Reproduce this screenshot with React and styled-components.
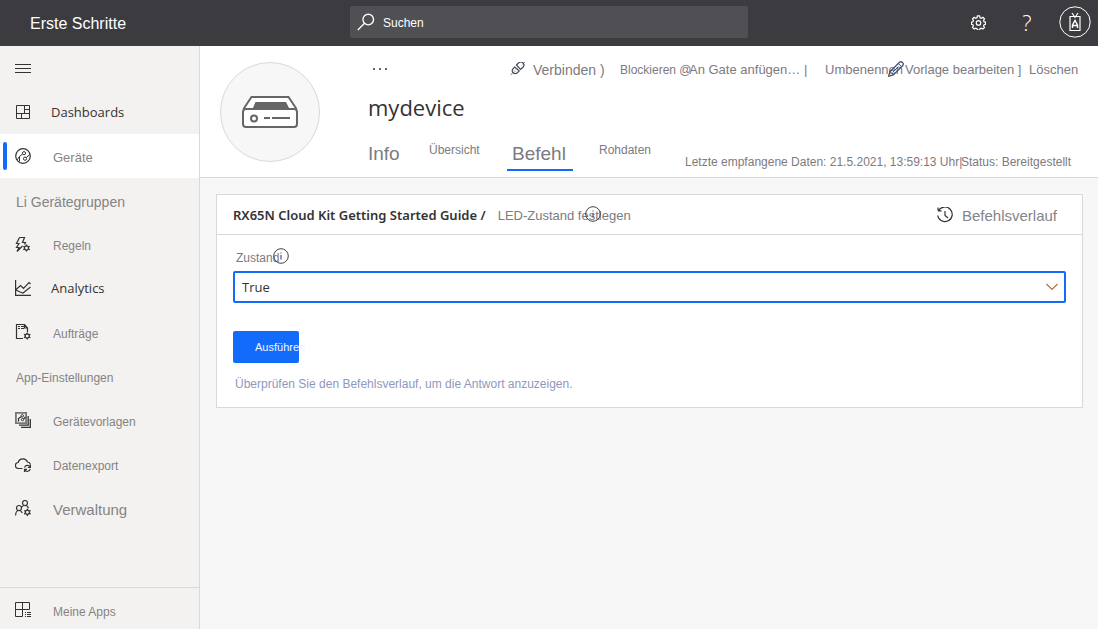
import React from "react";
import styled, { createGlobalStyle } from "styled-components";

const GlobalStyle = createGlobalStyle`
  *, *::before, *::after { box-sizing: border-box; }
  body { margin: 0; background: #f7f7f7; font-family: "Liberation Sans", Arial, sans-serif; font-size: 12px; color: #7d7a80; }
  button, select, input { font: inherit; color: inherit; }
  a { color: inherit; text-decoration: none; }
  svg { display: block; flex: none; }
`;

const uiFont = `"Open Sans", "Noto Sans", sans-serif`;

const Page = styled.div`
  min-height: 100vh;
  display: flex;
  flex-direction: column;
`;

const TopBar = styled.header`
  height: 46px;
  padding-bottom: 2px;
  display: grid;
  grid-template-columns: 1fr minmax(0, 398px) 1fr;
  align-items: center;
  background: #3c3b40;
  color: #fff;
`;

const AppName = styled.a`
  padding: 3px 0 0 30px;
  font-size: 16px;
  line-height: 20px;
`;

const SearchBox = styled.label`
  height: 32px;
  padding: 0 7px;
  display: flex;
  align-items: center;
  gap: 8px;
  border-radius: 2px;
  background: #505054;
`;

const SearchInput = styled.input`
  flex: 1;
  min-width: 0;
  padding: 2px 0 0;
  border: 0;
  outline: 0;
  background: transparent;
  font-size: 12px;
  &::placeholder { color: #fff; opacity: 1; }
`;

const TopActions = styled.div`
  display: flex;
  justify-content: flex-end;
  align-items: center;
`;

const IconButton = styled.button`
  width: ${(p) => p.$width || 48}px;
  height: 40px;
  padding: 0;
  border: 0;
  display: flex;
  align-items: center;
  justify-content: center;
  background: none;
  font-family: ${uiFont};
  font-size: 22px;
  font-weight: 300;
`;

const Columns = styled.div`
  flex: 1;
  display: flex;
`;

const Sidebar = styled.nav`
  width: 200px;
  flex: none;
  display: flex;
  flex-direction: column;
  border-right: 1px solid #d9d9d9;
  background: #f3f2f0;
`;

const MenuButton = styled.button`
  height: 44px;
  padding: 0 0 0 15px;
  border: 0;
  background: none;
  color: #333;
`;

const NavItem = styled.a`
  height: 44px;
  padding-left: ${(p) => (p.$active ? 12 : 15)}px;
  margin-left: ${(p) => (p.$active ? 3 : 0)}px;
  display: flex;
  align-items: center;
  color: #333;
  position: relative;
  ${(p) => p.$active && `
    background: #fff;
    box-shadow: -3px 0 0 #fff;
    &::before { content: ""; position: absolute; left: 0; top: 8px; width: 4px; height: 28px; border-radius: 2px; background: #136bfb; }
  `}
`;

const NavText = styled.span`
  padding: ${(p) => (p.$ui ? "0 0 0 20px" : "4px 0 0 22px")};
  font-family: ${(p) => (p.$ui ? uiFont : "inherit")};
  font-size: ${(p) => p.$size || 12}px;
  line-height: 20px;
  color: ${(p) => (p.$ui ? "#333" : "#858383")};
`;

const NavHeading = styled.h2`
  height: 44px;
  margin: 0;
  padding: 3px 0 0 16px;
  display: flex;
  align-items: center;
  font-size: ${(p) => p.$size || 12}px;
  font-weight: 400;
  color: #858383;
`;

const NavFooter = styled.div`
  margin-top: auto;
  border-top: 1px solid #d9d9d9;
  height: 42px;
`;

const Main = styled.main`
  flex: 1;
  min-width: 0;
`;

const DeviceHeader = styled.section`
  height: 132px;
  padding: 16px 0 0 20px;
  display: flex;
  border-bottom: 1px solid #d9d9d9;
  background: #fff;
`;

const Avatar = styled.div`
  width: 100px;
  height: 100px;
  flex: none;
  display: flex;
  align-items: center;
  justify-content: center;
  border: 1px solid #d9d9d9;
  border-radius: 50%;
  background: #f7f7f7;
`;

const DeviceBody = styled.div`
  flex: 1;
  min-width: 0;
  margin-left: 48px;
`;

const Toolbar = styled.div`
  height: 16px;
  display: grid;
  grid-template-columns: 142px 110px 69px 136px 80px 124px auto;
  align-items: center;
  align-content: center;
`;

const ToolButton = styled.button`
  position: relative;
  min-width: 0;
  height: 18px;
  padding: 0;
  border: 0;
  display: flex;
  align-items: center;
  gap: 7px;
  background: none;
  white-space: nowrap;
  font-size: ${(p) => p.$size || 13}px;
  line-height: 18px;
`;

const OverlayIcon = styled.span`
  position: absolute;
  left: ${(p) => p.$left}px;
  top: ${(p) => p.$top}px;
`;

const DeviceName = styled.h1`
  margin: 13px 0 0;
  font-family: ${uiFont};
  font-size: 22px;
  font-weight: 400;
  line-height: 32px;
  color: #333;
`;

const TabRow = styled.div`
  margin-top: 17px;
  display: grid;
  grid-template-columns: 61px 78px 92px 86px 276px auto;
  align-items: start;
  white-space: nowrap;
`;

const Tab = styled.a`
  justify-self: start;
  height: 31px;
  line-height: ${(p) => (p.$large ? 28 : 20)}px;
  padding: 0 ${(p) => (p.$active ? 7 : 0)}px 0 ${(p) => (p.$active ? 5 : 0)}px;
  font-size: ${(p) => (p.$large ? 19 : 12)}px;
  color: #7d7a80;
  border-bottom: 2px solid ${(p) => (p.$active ? "#136bfb" : "transparent")};
`;

const StatusText = styled.span`
  padding-top: 13px;
  line-height: 18px;
`;

const Card = styled.section`
  margin: 16px 15px 0 16px;
  border: 1px solid #d9d9d9;
  background: #fff;
`;

const CardHeader = styled.div`
  height: 40px;
  padding: 0 25px 0 16px;
  display: flex;
  align-items: center;
  border-bottom: 1px solid #d9d9d9;
`;

const CardTitle = styled.h2`
  margin: 0;
  font-family: "Noto Sans", "Open Sans", sans-serif;
  font-size: 13px;
  font-weight: 600;
  line-height: 20px;
  color: #333;
`;

const CommandName = styled.span`
  position: relative;
  margin-left: 12px;
  padding-top: 2px;
  font-size: 13px;
`;

const HistoryButton = styled.button`
  margin-left: auto;
  padding: 0;
  border: 0;
  display: flex;
  align-items: center;
  gap: 9px;
  background: none;
  font-size: 15px;
  line-height: 20px;
  color: #858489;
`;

const HistoryText = styled.span`
  padding-top: 3px;
`;

const CommandForm = styled.form`
  padding: 12px 16px 14px;
`;

const FieldLabel = styled.label`
  position: relative;
  display: block;
  padding: 2px 0 0 3px;
  line-height: 18px;
`;

const SelectWrap = styled.div`
  position: relative;
  margin-top: 4px;
`;

const Select = styled.select`
  appearance: none;
  display: block;
  width: 100%;
  height: 32px;
  padding: 0 32px 0 7px;
  border: 2px solid #136bfb;
  border-radius: 2px;
  outline: 0;
  background: #fff;
  font-family: ${uiFont};
  font-size: 13px;
  color: #333;
`;

const Chevron = styled.svg`
  position: absolute;
  right: 8px;
  top: 12px;
  pointer-events: none;
`;

const RunButton = styled.button`
  display: block;
  width: 66px;
  height: 32px;
  margin-top: 28px;
  padding: 0 0 0 22px;
  border: 0;
  border-radius: 2px;
  background: #136bfb;
  color: #f0f8ff;
  font-size: 11px;
  text-align: left;
  white-space: nowrap;
`;

const Hint = styled.p`
  margin: 12px 0 0 2px;
  line-height: 18px;
  color: #8f97bd;
`;

const Svg = ({ size = 16, children, ...rest }) => (
  <svg width={size} height={size} viewBox="0 0 16 16" fill="none" stroke="currentColor" strokeWidth="1" aria-hidden="true" {...rest}>
    {children}
  </svg>
);

const MiniGear = ({ x, y }) => (
  <g transform={`translate(${x} ${y})`} strokeWidth="1.300">
    <circle r="2.100" />
    <path d="M0-3.600v1.500M0 2.100v1.500M-3.200-1.800l1.400.8M1.800 1l1.400.8M-3.200 1.800l1.400-.8M1.800-1l1.400-.8" />
  </g>
);

const DashboardIcon = () => (
  <Svg><path d="M1.500 1.500h13v13h-13zM9.500 1.500v8M1.500 9.500h13M9.500 5.500h5M6.500 9.500v5" /></Svg>
);
const DevicesIcon = () => (
  <Svg>
    <circle cx="8" cy="8" r="7.300" strokeWidth="1.200" />
    <circle cx="9" cy="5.200" r="1.600" /><circle cx="10" cy="10.700" r="1.600" />
    <path d="M7.500 6 4.500 8.500v5M11.200 9.600 14.800 6.500M4.500 8.500 2 12" />
  </Svg>
);
const RulesIcon = () => (
  <Svg>
    <path d="M4.500 1.500H9.500L7.500 6.500h3L9.500 8.500M4.500 1.500 1.500 7.500h2.500L1.500 11.500h2.500L2 15.500 7.500 10" strokeWidth="1.200" />
    <MiniGear x={11.5} y={12} />
  </Svg>
);
const AnalyticsIcon = () => (
  <Svg strokeWidth="1.200">
    <path d="M.600 0v15.400H16M1 9.500 5.500 5.500 8.500 8.500 14 2.500 15.500 4M1 10l4 2 3 1 7.500-6" />
  </Svg>
);
const JobsIcon = () => (
  <Svg>
    <path d="M8 14.500H1.500v-14h8l3 3.500v4M3 2.500h2M6 2.500h3M3 4.500h2M6 4.500h3M9.500.500V4h3" strokeWidth="1.200" />
    <MiniGear x={12.2} y={12} />
  </Svg>
);
const TemplatesIcon = () => (
  <Svg>
    <path d="M.900.900h10.200v10.200H.900z" strokeWidth="1.800" stroke="#777" />
    <circle cx="7.300" cy="3.800" r="1.200" /><circle cx="7.500" cy="7.600" r="1.200" />
    <path d="M6.500 4.500 3.500 6.500v3M8.500 7l2-2M13.200 4v9.200H4M15.300 7v8.300H6" strokeWidth="1.300" />
  </Svg>
);
const ExportIcon = () => (
  <Svg strokeWidth="1.200">
    <path d="M7.500 12.500h-4A2.900 2.900 0 0 1 3.200 6.500a4.900 4.900 0 0 1 9.300-.500A3.200 3.200 0 0 1 15.400 8.500" />
    <path d="M9.500 11.500A3 3 0 0 1 15 11M15.400 8.800v2.700h-2.600M15.200 13A3 3 0 0 1 9.800 14M9.500 16v-2.700H12" />
  </Svg>
);
const AdminIcon = () => (
  <Svg strokeWidth="1.200">
    <circle cx="10" cy="3" r="2.500" /><circle cx="4" cy="8" r="2.500" />
    <path d="M.600 15.500c0-3 1.400-5 3.400-5 1.800 0 2.700 1 3.300 2.500M6.500 7C7.500 6 9 5.500 10 5.500c1.800 0 3 1.200 3.500 2.700" />
    <MiniGear x={12.4} y={12.3} />
  </Svg>
);
const MyAppsIcon = () => (
  <Svg>
    <path d="M.500.500h14v7H.500zM.500 7.500v7h7v-14M10 10.500h1M12 10.500h4M10 12.500h1M12 12.500h4M10 14.500h1M12 14.500h4" />
  </Svg>
);
const InfoIcon = () => (
  <Svg stroke="#444"><circle cx="8" cy="8" r="7.300" /><path d="M8 4.500v1M8 7v4.500" stroke="#74406f" strokeWidth="1.200" /></Svg>
);

const navItems = [
  { text: "Dashboards", icon: DashboardIcon, ui: true, size: 13 },
  { text: "Geräte", icon: DevicesIcon, active: true, size: 13 },
  { text: "Li Gerätegruppen", heading: true, size: 14 },
  { text: "Regeln", icon: RulesIcon },
  { text: "Analytics", icon: AnalyticsIcon, ui: true, size: 13 },
  { text: "Aufträge", icon: JobsIcon },
  { text: "App-Einstellungen", heading: true },
  { text: "Gerätevorlagen", icon: TemplatesIcon },
  { text: "Datenexport", icon: ExportIcon },
  { text: "Verwaltung", icon: AdminIcon, size: 15 },
];

export default function App() {
  return (
    <Page>
      <GlobalStyle />
      <TopBar>
        <AppName href="#">Erste Schritte</AppName>
        <SearchBox>
          <Svg size={18} strokeWidth="1.200"><circle cx="10" cy="5.800" r="4.700" /><path d="M6.700 9.200.700 15.200" /></Svg>
          <SearchInput type="text" placeholder="Suchen" aria-label="Suchen" />
        </SearchBox>
        <TopActions>
          <IconButton aria-label="Einstellungen">
            <Svg size={15} strokeWidth="1.300">
              <path d="M6.800 1h2.400l.4 1.900 1.500.6 1.600-1 1.700 1.700-1 1.600.6 1.500 1.500.3v2.300l-1.500.4-.6 1.400 1 1.600-1.700 1.700-1.600-1-1.500.6-.4 1.400H6.800l-.4-1.400-1.500-.6-1.600 1-1.700-1.700 1-1.600-.6-1.400L.600 9.900V7.600L2 7.300l.6-1.500-1-1.600 1.700-1.700 1.600 1 1.500-.6z" />
              <circle cx="8" cy="8.400" r="2.400" />
            </Svg>
          </IconButton>
          <IconButton aria-label="Hilfe" $width={50}>?</IconButton>
          <IconButton aria-label="Konto" $width={46}>
            <svg width="32" height="32" viewBox="0 0 32 32" fill="none" stroke="#fff" aria-hidden="true">
              <circle cx="16" cy="16" r="15.200" />
              <path d="M11 10.500h10v14H11zM13 7 16 11.500 19 7" strokeWidth="1.200" />
              <path d="M13.500 22v-3L16 14.500l2.500 4.500v3M13.500 19.500h5" strokeWidth="1.400" />
            </svg>
          </IconButton>
        </TopActions>
      </TopBar>

      <Columns>
        <Sidebar>
          <MenuButton aria-label="Menü"><Svg><path d="M0 4.500h16M0 8.500h16M0 12.500h16" /></Svg></MenuButton>
          {navItems.map(({ text, icon: Icon, heading, active, ui, size }) =>
            heading ? (
              <NavHeading key={text} $size={size}>{text}</NavHeading>
            ) : (
              <NavItem key={text} href="#" $active={active}>
                <Icon />
                <NavText $ui={ui} $size={size}>{text}</NavText>
              </NavItem>
            )
          )}
          <NavFooter>
            <NavItem href="#"><MyAppsIcon /><NavText>Meine Apps</NavText></NavItem>
          </NavFooter>
        </Sidebar>

        <Main>
          <DeviceHeader>
            <Avatar>
              <svg width="56" height="32" viewBox="0 0 56 32" fill="none" stroke="#666" strokeWidth="2" aria-hidden="true">
                <path d="M1.500 13 9.500 1h37l8 12" fill="#fff" />
                <path d="M13.500 6h30.500l3.500 7H10.500z" fill="#666" stroke="none" />
                <rect x="1" y="13" width="54" height="18" rx="3" fill="#fff" />
                <circle cx="12" cy="22.500" r="3" />
                <path d="M22 22h6M30 22h18" />
              </svg>
            </Avatar>
            <DeviceBody>
              <Toolbar>
                <ToolButton aria-label="Mehr">
                  <svg width="24" height="16" viewBox="0 0 24 16" fill="#666" aria-hidden="true"><path d="M5 6h2v2H5zM11 6h2v2h-2zM17 6h2v2h-2z" /></svg>
                </ToolButton>
                <ToolButton $size={14}>
                  <Svg>
                    <path d="M.500 13 3.500 10M12.500 2 15 0" />
                    <path d="M6.500 3 8.500 1a3 3 0 0 1 4.500 4.200L10.500 7.500zM4.700 5l4.500 4-2.200 2A3 3 0 0 1 2.700 7z" stroke="#3d4a63" strokeWidth="1.200" />
                    <path d="M6 7.500 8 5.500M4 8.500l1.500 1.500" stroke="#b88732" />
                  </Svg>
                  Verbinden )
                </ToolButton>
                <ToolButton $size={12}>Blockieren @</ToolButton>
                <ToolButton>An Gate anfügen… |</ToolButton>
                <ToolButton>Umbenennen</ToolButton>
                <ToolButton>
                  <OverlayIcon $left={-17} $top={0}>
                    <Svg>
                      <path d="M.700 15.300 2 10.700 11.500 1.200Q13 .200 14.500 1.500T14.800 4.500L5.300 14z" stroke="#46527a" strokeWidth="1.300" />
                      <path d="M2 10.700 5.300 14M10.300 2.500l3.200 3.200M4.500 11.500l6-6" stroke="#46527a" />
                      <path d="M.700 15.300 1.500 13" stroke="#b4632d" strokeWidth="2" />
                    </Svg>
                  </OverlayIcon>
                  Vorlage bearbeiten ]
                </ToolButton>
                <ToolButton>Löschen</ToolButton>
              </Toolbar>
              <DeviceName>mydevice</DeviceName>
              <TabRow>
                <Tab href="#" $large>Info</Tab>
                <Tab href="#">Übersicht</Tab>
                <Tab href="#" $large $active aria-current="page">Befehl</Tab>
                <Tab href="#">Rohdaten</Tab>
                <StatusText>Letzte empfangene Daten: 21.5.2021, 13:59:13 Uhr|</StatusText>
                <StatusText>Status: Bereitgestellt</StatusText>
              </TabRow>
            </DeviceBody>
          </DeviceHeader>

          <Card>
            <CardHeader>
              <CardTitle>RX65N Cloud Kit Getting Started Guide /</CardTitle>
              <CommandName>
                LED-Zustand festlegen
                <OverlayIcon $left={87} $top={0}><InfoIcon /></OverlayIcon>
              </CommandName>
              <HistoryButton>
                <Svg stroke="#333">
                  <path d="M1 3.500v-3M1 3.800h3.500M1.500 3.800A7.300 7.300 0 1 1 .700 8.500M8 4v4.500l3 2.500" strokeWidth="1.200" />
                </Svg>
                <HistoryText>Befehlsverlauf</HistoryText>
              </HistoryButton>
            </CardHeader>
            <CommandForm onSubmit={(e) => e.preventDefault()}>
              <FieldLabel htmlFor="zustand">
                Zustand
                <OverlayIcon $left={40} $top={1}><InfoIcon /></OverlayIcon>
              </FieldLabel>
              <SelectWrap>
                <Select id="zustand" defaultValue="True">
                  <option>True</option>
                  <option>False</option>
                </Select>
                <Chevron width="12" height="8" viewBox="0 0 12 8" fill="none" stroke="#b8703f" aria-hidden="true">
                  <path d="M.500 1 6 6.500 11.500 1" strokeWidth="1.200" />
                </Chevron>
              </SelectWrap>
              <RunButton type="submit">Ausführen</RunButton>
              <Hint>Überprüfen Sie den Befehlsverlauf, um die Antwort anzuzeigen.</Hint>
            </CommandForm>
          </Card>
        </Main>
      </Columns>
    </Page>
  );
}
